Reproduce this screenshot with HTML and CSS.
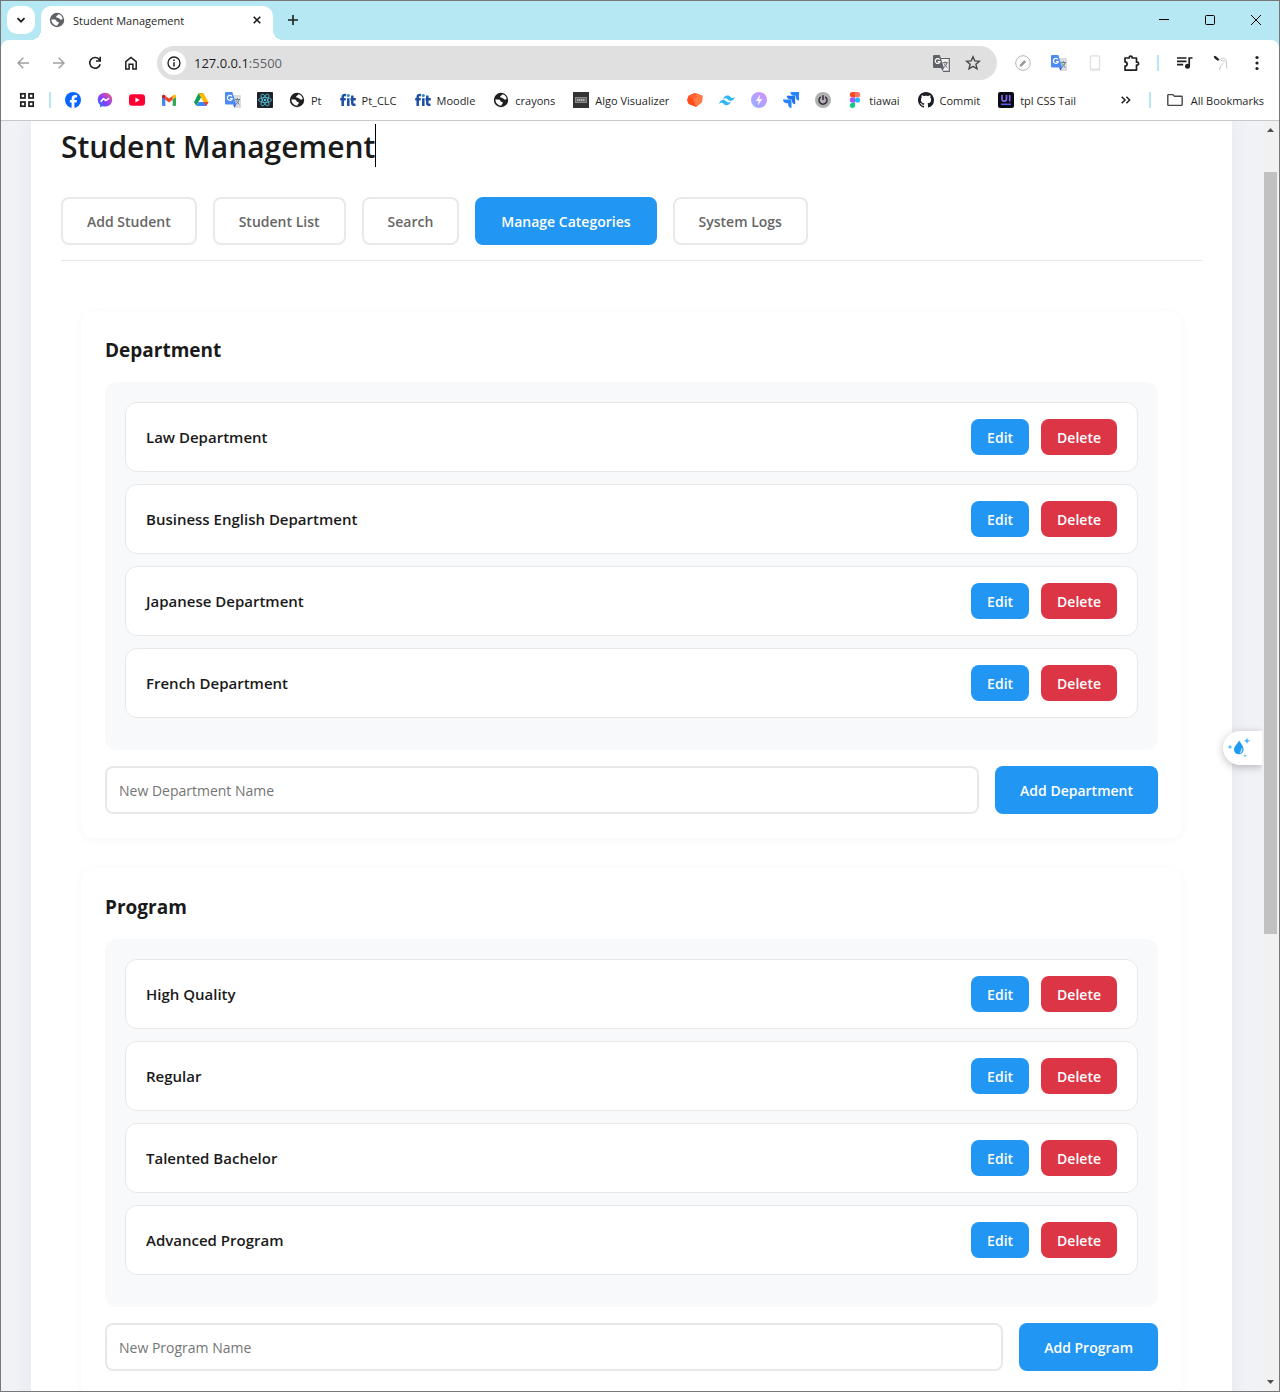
FILE: index.html
```html
<!DOCTYPE html>
<html lang="en">
<head>
<meta charset="utf-8">
<meta name="viewport" content="width=device-width, initial-scale=1">
<title>Student Management</title>
<link rel="stylesheet" href="styles.css">
</head>
<body>
<svg class="sprite" aria-hidden="true">
  <symbol id="globe" viewBox="0 0 16 16"><circle cx="8" cy="8" r="7.200" fill="currentColor"/><path d="M2.400 7.600h3.200c1.700 0 1.600 2.200 3.100 2.300 1 .1 1.100.4 1 1.300-.1 1-1.300 1-1.300 2.500-3.400 0-6-2.600-6-6.100zM9.500 2.300c-.3 1.300-2.300 1-2.300 2.500 0 1 1 1.100 2 1.100 1.300 0 1.500 1.700 2.900 1.700.8 0 1.300-.3 1.600-.9-.5-2.200-2-3.900-4.200-4.400z" fill="#fff"/></symbol>
  <symbol id="translate" viewBox="0 0 16 16"><path d="M7 3h8a1 1 0 0 1 1 1v11a1 1 0 0 1-1 1H10z" fill="#dcdcdc"/><path d="M1 0h6.300l4 12.500H1a1 1 0 0 1-1-1V1a1 1 0 0 1 1-1z" fill="#4c8bf5"/><path d="M8 12.500h3.300L9.500 15.800z" fill="#2c5fd8"/><path d="M6.900 4.400A2.500 2.500 0 1 0 7.300 6.500H5" fill="none" stroke="#fff" stroke-width="1.200"/><path d="M10 7.500h5M12.500 6.300v1.200M14 7.500c-.3 2-1.700 3.800-3 4.700M11.200 8.500c.6 1.600 1.700 2.800 3.200 4" fill="none" stroke="#607d8b" stroke-width="1"/></symbol>
  <symbol id="fit" viewBox="0 0 16 16"><g fill="none" stroke="#1c4ea8" stroke-width="2.500"><path d="M6 3.200C3.700 2.600 2.700 3.500 2.700 5v9M.2 7.200H5.700M8.300 6.200V14M12.300 3.500v8c0 1.200 1 1.500 3.200 1.200M10.500 7.200h5.300"/></g><circle cx="8.300" cy="3.500" r="1.500" fill="#2a86d8"/></symbol>
</svg>
<div class="window">
  <header class="chrome">
    <div class="tabstrip">
      <button class="tab-search" type="button" aria-label="Search tabs"><svg width="10" height="10" viewBox="0 0 10 10"><path d="M1.500 3.200 5 6.700l3.500-3.500" fill="none" stroke="#1f1f1f" stroke-width="1.800"/></svg></button>
      <div class="tab">
        <svg class="tab-icon" width="16" height="16"><use href="#globe"/></svg>
        <span class="tab-title">Student Management</span>
        <button class="tab-close" type="button" aria-label="Close tab"><svg width="8" height="8" viewBox="0 0 8 8"><path d="M.7.7l6.600 6.600M7.300.7.7 7.300" stroke="#1f1f1f" stroke-width="1.600"/></svg></button>
      </div>
      <button class="new-tab" type="button" aria-label="New tab"><svg width="12" height="12" viewBox="0 0 12 12"><path d="M6 1v10M1 6h10" stroke="#1f1f1f" stroke-width="1.600"/></svg></button>
      <div class="controls">
        <button type="button" aria-label="Minimize"><svg width="10" height="10" viewBox="0 0 10 10"><path d="M0 4.500h10" stroke="#000"/></svg></button>
        <button type="button" aria-label="Maximize"><svg width="10" height="10" viewBox="0 0 10 10"><rect x=".5" y=".5" width="9" height="9" rx="1" fill="none" stroke="#000"/></svg></button>
        <button type="button" aria-label="Close"><svg width="10" height="10" viewBox="0 0 10 10"><path d="M0 0l10 10M10 0 0 10" stroke="#000"/></svg></button>
      </div>
    </div>
    <div class="toolbar">
      <button class="tool" type="button" aria-label="Back"><svg width="12" height="12" viewBox="0 0 12 12"><path d="M12 6H1M6.300.7 1 6l5.300 5.300" fill="none" stroke="#a0a0a0" stroke-width="1.500"/></svg></button>
      <button class="tool" type="button" aria-label="Forward"><svg width="12" height="12" viewBox="0 0 12 12"><path d="M0 6h11M5.700.7 11 6l-5.300 5.300" fill="none" stroke="#a0a0a0" stroke-width="1.500"/></svg></button>
      <button class="tool" type="button" aria-label="Reload"><svg width="14" height="14" viewBox="0 0 14 14"><path d="M12.200 8.200A5.300 5.300 0 1 1 11 3.300l1 1.200" fill="none" stroke="#1f1f1f" stroke-width="1.600"/><path d="M13 .8v5H8V4.200h3.400V.8z" fill="#1f1f1f"/></svg></button>
      <button class="tool" type="button" aria-label="Home"><svg width="14" height="14" viewBox="0 0 14 14"><path d="M1.800 13V5.600L7 1.400l5.200 4.200V13H8.900V8.200H5.100V13z" fill="none" stroke="#1f1f1f" stroke-width="1.500"/></svg></button>
      <div class="omnibox">
        <button class="site-info" type="button" aria-label="View site information"><svg width="14" height="14" viewBox="0 0 14 14"><circle cx="7" cy="7" r="6" fill="none" stroke="#1f1f1f" stroke-width="1.300"/><path d="M7 6.200v4.200M7 3.500V5" stroke="#1f1f1f" stroke-width="1.500"/></svg></button>
        <span class="url">127.0.0.1<span class="port">:5500</span></span>
        <button class="omni-action" type="button" aria-label="Translate this page"><svg width="17" height="17" viewBox="0 0 17 17"><path d="M8 3.500h8.300v12.800H10" fill="#f2f2f2" stroke="#5f6368" stroke-width="1.200"/><path d="M1 0h5.800L11 13H1a1 1 0 0 1-1-1V1a1 1 0 0 1 1-1zM8 13h3l-1.500 3z" fill="#5f6368"/><path d="M6.600 4.600A2.400 2.400 0 1 0 7 6.600H4.800" fill="none" stroke="#fff" stroke-width="1.200"/><path d="M9.800 7.700h5M12.300 6.500v1.200M14 7.700c-.3 2-1.700 3.800-3 4.700M11.200 8.700c.6 1.600 1.700 2.800 3.200 4" fill="none" stroke="#5f6368"/></svg></button>
        <button class="omni-action" type="button" aria-label="Bookmark this tab"><svg width="16" height="16" viewBox="0 0 16 16"><path d="M8 1.700l1.800 4.200 4.600.4-3.500 3 1.100 4.500L8 11.400l-4 2.400 1.100-4.500-3.500-3 4.600-.4z" fill="none" stroke="#474747" stroke-width="1.400"/></svg></button>
      </div>
      <button class="tool" type="button" aria-label="Pen extension"><svg width="16" height="16" viewBox="0 0 16 16"><circle cx="8" cy="8" r="7.300" fill="#fff" stroke="#b5b5b5"/><path d="M4.500 11.700l.5-2.300 4.300-4.300 1.800 1.800-4.300 4.300z" fill="#999"/></svg></button>
      <button class="tool" type="button" aria-label="Google Translate"><svg width="16" height="16"><use href="#translate"/></svg></button>
      <button class="tool" type="button" aria-label="Device extension"><svg width="16" height="16" viewBox="0 0 16 16"><rect x="3.500" y=".8" width="9" height="14.400" rx="1" fill="none" stroke="#dedede" stroke-width="1.200"/><path d="M3.500 14h9" stroke="#dedede"/></svg></button>
      <button class="tool" type="button" aria-label="Extensions"><svg width="17" height="17" viewBox="0 0 17 17"><path d="M2 3h4.200V2.600a1.500 1.500 0 0 1 3 0V3h4.300v4.200h.6a1.500 1.500 0 0 1 0 3h-.6v4.900H2v-3.900c2.800-.2 2.800-4.200 0-4.400z" fill="none" stroke="#1f1f1f" stroke-width="1.700" stroke-linejoin="round"/></svg></button>
      <span class="divider"></span>
      <button class="tool" type="button" aria-label="Media controls"><svg width="16" height="14" viewBox="0 0 16 14"><path d="M0 2h9.500M0 5.300h9.500M0 8.600h6.200M15.500 2h-3.300v8" fill="none" stroke="#1f1f1f" stroke-width="1.700"/><circle cx="10.500" cy="10.200" r="2.500" fill="#1f1f1f"/></svg></button>
      <button class="tool" type="button" aria-label="Profile"><svg width="16" height="16" viewBox="0 0 16 16"><path d="M1 1.500 5.500 6M6 5.500C8 3 12 2.500 13 5l.8 8.500M6.500 15l1-4 3-3M8 5.500l4 .8" fill="none" stroke="#c9c5c5" stroke-width="1"/><path d="M.8.800 3 1.300l3.500 3.200-1.700 1.300L1.300 3.200z" fill="#222"/></svg></button>
      <button class="tool" type="button" aria-label="Menu"><svg width="4" height="16" viewBox="0 0 4 16"><g fill="#1f1f1f"><circle cx="2" cy="2.500" r="1.600"/><circle cx="2" cy="8" r="1.600"/><circle cx="2" cy="13.500" r="1.600"/></g></svg></button>
    </div>
    <nav class="bookmarks" aria-label="Bookmarks">
      <a class="mark" href="#" aria-label="Apps"><svg width="16" height="16" viewBox="0 0 16 16"><g fill="none" stroke="#1f1f1f" stroke-width="1.700"><rect x="1.800" y="1.800" width="4.200" height="4.200"/><rect x="10" y="1.800" width="4.200" height="4.200"/><rect x="1.800" y="10" width="4.200" height="4.200"/><rect x="10" y="10" width="4.200" height="4.200"/></g></svg></a>
      <span class="divider"></span>
      <a class="mark" href="#" aria-label="Facebook"><svg width="16" height="16" viewBox="0 0 16 16"><circle cx="8" cy="8" r="8" fill="#0866ff"/><path d="M6.600 15.900v-5.300H4.900V8.100h1.700V7c0-2.700 1.200-4 3.900-4 .5 0 1.300.1 1.600.2v2.200h-.9c-1.300 0-1.800.5-1.800 1.800v.9h2.600l-.5 2.500H9.400v5.400z" fill="#fff"/></svg></a>
      <a class="mark" href="#" aria-label="Messenger"><svg width="16" height="16" viewBox="0 0 16 16"><defs><linearGradient id="mg" x1="0" y1="1" x2="1" y2="0"><stop offset="0" stop-color="#1f7bff"/><stop offset=".45" stop-color="#8a3cff"/><stop offset="1" stop-color="#ff5f72"/></linearGradient></defs><path d="M8 .8c-4.100 0-7.200 3-7.200 6.900 0 2.100.8 3.900 2.200 5.100v2.400l2.200-1c.9.300 1.800.4 2.800.4 4.100 0 7.200-3 7.200-6.900S12.100.8 8 .8z" fill="url(#mg)"/><path d="M3.700 9.800 6.500 6.600l2.300 2 3.400-2.400" fill="none" stroke="#fff" stroke-width="1.500" stroke-linejoin="round"/></svg></a>
      <a class="mark" href="#" aria-label="YouTube"><svg width="16" height="16" viewBox="0 0 16 16"><rect y="2.300" width="16" height="11.400" rx="3" fill="#f03"/><path d="M6.400 5.600v4.800L10.600 8z" fill="#fff"/></svg></a>
      <a class="mark" href="#" aria-label="Gmail"><svg width="16" height="16" viewBox="0 0 16 16"><path d="M1 4.500 4.300 7v7H2a1 1 0 0 1-1-1z" fill="#4285f4"/><path d="M15 4.500 11.700 7v7H14a1 1 0 0 0 1-1z" fill="#34a853"/><path d="M4.300 3.700 8 6.500l3.700-2.800v4L8 10.500 4.300 7.700z" fill="#ea4335"/><path d="M1 4.200C1 2.500 2.800 2.300 4 3.300l.3.300v4L1 5.200z" fill="#c5221f"/><path d="M15 4.200c0-1.700-1.800-1.900-3-.9l-.3.300v4L15 5.200z" fill="#fbbc04"/></svg></a>
      <a class="mark" href="#" aria-label="Google Drive"><svg width="16" height="16" viewBox="0 0 16 16"><path d="M5.500 1.300h5L8 5.600 3.300 13.800 1 10.200z" fill="#0f9d58"/><path d="M5.500 1.300h5l5 8.700h-4.900z" fill="#ffba00"/><path d="M3.300 13.900 5.500 10h10l-2.300 3.900z" fill="#4285f4"/><path d="M10.600 10h4.900l-2.300 3.900z" fill="#ea4335"/></svg></a>
      <a class="mark" href="#" aria-label="Google Translate"><svg width="16" height="16"><use href="#translate"/></svg></a>
      <a class="mark" href="#" aria-label="React"><svg width="16" height="16" viewBox="0 0 16 16"><rect width="16" height="16" rx="1" fill="#20232a"/><g fill="none" stroke="#58c4dc" stroke-width=".8"><ellipse cx="8" cy="8" rx="6.500" ry="2.500"/><ellipse cx="8" cy="8" rx="6.500" ry="2.500" transform="rotate(60 8 8)"/><ellipse cx="8" cy="8" rx="6.500" ry="2.500" transform="rotate(120 8 8)"/></g><circle cx="8" cy="8" r="1.200" fill="#58c4dc"/></svg></a>
      <a class="mark labelled" href="#"><svg width="16" height="16"><use href="#globe"/></svg>Pt</a>
      <a class="mark labelled" href="#"><svg width="16" height="16"><use href="#fit"/></svg>Pt_CLC</a>
      <a class="mark labelled" href="#"><svg width="16" height="16"><use href="#fit"/></svg>Moodle</a>
      <a class="mark labelled" href="#"><svg width="16" height="16"><use href="#globe"/></svg>crayons</a>
      <a class="mark labelled" href="#"><svg width="16" height="16" viewBox="0 0 16 16"><rect width="16" height="16" fill="#333"/><rect x="2.500" y="5.500" width="11" height="5" fill="#666" stroke="#999" stroke-width=".8"/><path d="M4 8h8" stroke="#ccc" stroke-width="1.500" stroke-dasharray="1.500 .5"/></svg>Algo Visualizer</a>
      <a class="mark" href="#" aria-label="Codebox"><svg width="16" height="16" viewBox="0 0 16 16"><path d="M1.500 3.800 8 1l7.500 2.700L15 10l-6 5-7.500-3L0 8z" fill="#ff4a1c"/><path d="M8 1l7.500 2.700L15 10l-6 5-3-8z" fill="#ff7a45"/><path d="M1.500 3.800 8 1l2 4-4 2z" fill="#ff6332"/></svg></a>
      <a class="mark" href="#" aria-label="Tailwind"><svg width="16" height="16" viewBox="0 0 16 16"><path d="M4 7.900C4.500 5.300 6 3.500 8.300 3.500c3 0 3 2.300 5 2.600 1 .1 1.900-.4 2.700-1.300-.6 2.300-2 4-4.200 4-2.900 0-3-2.100-5-2.500-1-.1-2 .5-2.800 1.600zM0 12c.6-2.500 2-3.900 4.200-3.900 2.900 0 3 2.100 5 2.500 1 .1 2-.4 2.800-1.300-.6 2.300-2 3.900-4.200 3.900-2.900 0-3-2.100-5-2.500-1-.1-2 .3-2.800 1.300z" fill="#2eb8f5"/></svg></a>
      <a class="mark" href="#" aria-label="Lightning"><svg width="16" height="16" viewBox="0 0 16 16"><defs><linearGradient id="lg" x1="0" y1="1" x2="1" y2="0"><stop offset="0" stop-color="#8db4ff"/><stop offset="1" stop-color="#da8cff"/></linearGradient></defs><circle cx="8" cy="8" r="8" fill="url(#lg)"/><path d="M9.300 2.500 4.800 9h3l-1 4.500L11.300 7h-3z" fill="#fff"/></svg></a>
      <a class="mark" href="#" aria-label="Jira"><svg width="16" height="16" viewBox="0 0 16 16"><path d="M7.500 0H16v8.500c-2 0-3.200-1.400-3.200-3.200V3.700h-1.700C9 3.700 7.500 2.200 7.500 0z" fill="#2684ff"/><path d="M3.800 3.800h8.400v8.400C10.200 12.200 9 11 9 9V7.400H7.300c-2 0-3.500-1.400-3.500-3.600z" fill="#1f74ee"/><path d="M0 7.600h8.500V16c-2 0-3.300-1.200-3.300-3.200v-1.600H3.500C1.500 11.200 0 9.800 0 7.600z" fill="#2684ff"/></svg></a>
      <a class="mark" href="#" aria-label="Power"><svg width="16" height="16" viewBox="0 0 16 16"><circle cx="8" cy="8" r="8" fill="#b0b0b0"/><path d="M5.800 4.800a4 4 0 1 0 4.400 0M8 3.300V8" fill="none" stroke="#3a2b40" stroke-width="1.500"/></svg></a>
      <a class="mark labelled" href="#"><svg width="16" height="16" viewBox="0 0 16 16"><path d="M5.500 0H8v5.300H5.500a2.600 2.600 0 0 1 0-5.300z" fill="#f24e1e"/><path d="M8 0h2.500a2.600 2.600 0 0 1 0 5.300H8z" fill="#ff7262"/><path d="M5.500 5.300H8v5.400H5.500a2.600 2.600 0 0 1 0-5.400z" fill="#a259ff"/><circle cx="10.500" cy="8" r="2.600" fill="#1abcfe"/><path d="M5.500 10.700H8v2.600a2.600 2.600 0 1 1-2.500-2.600z" fill="#0acf83"/></svg>tiawai</a>
      <a class="mark labelled" href="#"><svg width="16" height="16" viewBox="0 0 16 16"><path fill="#1b1f24" d="M8 0C3.580 0 0 3.580 0 8c0 3.540 2.290 6.530 5.470 7.590.4.070.55-.17.55-.38 0-.19-.01-.82-.01-1.490-2.010.37-2.530-.49-2.690-.94-.09-.23-.48-.94-.82-1.130-.28-.15-.68-.52-.01-.53.63-.01 1.080.58 1.230.82.72 1.210 1.870.87 2.330.66.070-.52.28-.87.51-1.070-1.780-.2-3.640-.89-3.640-3.950 0-.87.31-1.590.82-2.150-.08-.2-.36-1.020.08-2.120 0 0 .67-.21 2.200.82.64-.18 1.320-.27 2-.27s1.360.09 2 .27c1.530-1.040 2.200-.82 2.200-.82.44 1.100.16 1.920.08 2.120.51.56.82 1.270.82 2.150 0 3.070-1.870 3.750-3.650 3.950.29.25.54.73.54 1.480 0 1.070-.01 1.930-.01 2.200 0 .21.15.46.55.38A8.010 8.010 0 0 0 16 8c0-4.420-3.580-8-8-8z"/></svg>Commit</a>
      <a class="mark labelled" href="#"><svg width="16" height="16" viewBox="0 0 16 16"><rect width="16" height="16" rx="2" fill="#0b0b12"/><path d="M4 3v4c0 3 4.500 3 4.500 0V3M11.700 3v6.500" fill="none" stroke="#8a6bff" stroke-width="1.600"/><path d="M3 12.300h10" stroke="#5b5bf0" stroke-width="1.500"/></svg>tpl CSS Tail</a>
      <button class="mark overflow" type="button" aria-label="More bookmarks"><svg width="10" height="8" viewBox="0 0 10 8"><path d="M.7.7 4 4 .7 7.300M5.400.7 8.700 4 5.400 7.300" fill="none" stroke="#1f1f1f" stroke-width="1.500"/></svg></button>
      <span class="divider"></span>
      <a class="mark labelled folder" href="#"><svg width="16" height="16" viewBox="0 0 16 16"><path d="M.8 12.700V3.300c0-.4.300-.7.700-.7h4.300l1.700 1.700h7c.4 0 .7.300.7.700v7.700c0 .4-.3.700-.7.700h-13a.7.700 0 0 1-.7-.7z" fill="none" stroke="#474747" stroke-width="1.400"/></svg>All Bookmarks</a>
    </nav>
  </header>
  <div class="viewport">
    <div class="page">
      <main class="container">
        <h1 class="title">Student Management<span class="caret"></span></h1>
        <nav class="nav">
          <button class="nav-btn" type="button">Add Student</button>
          <button class="nav-btn" type="button">Student List</button>
          <button class="nav-btn" type="button">Search</button>
          <button class="nav-btn active" type="button">Manage Categories</button>
          <button class="nav-btn" type="button">System Logs</button>
        </nav>
        <div class="categories">
          <section class="card">
            <h2 class="card-title">Department</h2>
            <ul class="list">
              <li class="item"><span>Law Department</span><span class="actions"><button class="btn" type="button">Edit</button><button class="btn danger" type="button">Delete</button></span></li>
              <li class="item"><span>Business English Department</span><span class="actions"><button class="btn" type="button">Edit</button><button class="btn danger" type="button">Delete</button></span></li>
              <li class="item"><span>Japanese Department</span><span class="actions"><button class="btn" type="button">Edit</button><button class="btn danger" type="button">Delete</button></span></li>
              <li class="item"><span>French Department</span><span class="actions"><button class="btn" type="button">Edit</button><button class="btn danger" type="button">Delete</button></span></li>
            </ul>
            <form class="add-row">
              <input class="field" type="text" placeholder="New Department Name" aria-label="New Department Name">
              <button class="add-btn" type="button">Add Department</button>
            </form>
          </section>
          <section class="card">
            <h2 class="card-title">Program</h2>
            <ul class="list">
              <li class="item"><span>High Quality</span><span class="actions"><button class="btn" type="button">Edit</button><button class="btn danger" type="button">Delete</button></span></li>
              <li class="item"><span>Regular</span><span class="actions"><button class="btn" type="button">Edit</button><button class="btn danger" type="button">Delete</button></span></li>
              <li class="item"><span>Talented Bachelor</span><span class="actions"><button class="btn" type="button">Edit</button><button class="btn danger" type="button">Delete</button></span></li>
              <li class="item"><span>Advanced Program</span><span class="actions"><button class="btn" type="button">Edit</button><button class="btn danger" type="button">Delete</button></span></li>
            </ul>
            <form class="add-row">
              <input class="field" type="text" placeholder="New Program Name" aria-label="New Program Name">
              <button class="add-btn" type="button">Add Program</button>
            </form>
          </section>
        </div>
      </main>
      <button class="widget" type="button" aria-label="Assistant"><svg width="24" height="22" viewBox="0 0 24 22"><path d="M12 3.500c2 3.200 4.600 6 4.600 9a4.800 4.800 0 0 1-9.600 0c0-3 3.500-5.500 5-9z" fill="#1b9cf2"/><path d="M14.500 11.500c.6 1.800 0 3.500-1.600 4.300" fill="none" stroke="#bfe3ff" stroke-width="1.200"/><path d="M20 .5l.9 2.400 2.400.9-2.400.9-.9 2.400-.9-2.400-2.400-.9 2.400-.9zM3 7.500l.7 1.800 1.800.7-1.800.7L3 12.500l-.7-1.800L.5 10l1.800-.7zM18 17l.5 1.200 1.200.5-1.200.5-.5 1.200-.5-1.200-1.200-.5 1.200-.5z" fill="#45b4f7"/></svg></button>
    </div>
    <div class="scrollbar" aria-hidden="true">
      <svg class="arrow" width="7" height="4" viewBox="0 0 7 4"><path d="M0 4 3.500 0 7 4z" fill="#505050"/></svg>
      <div class="track"><div class="thumb"></div></div>
      <svg class="arrow" width="7" height="4" viewBox="0 0 7 4"><path d="M0 0l3.500 4L7 0z" fill="#505050"/></svg>
    </div>
  </div>
</div>
</body>
</html>
```
FILE: styles.css
```css
* { box-sizing: border-box; }
body {
  margin: 0;
  font-family: "Open Sans", "Noto Sans", sans-serif;
  color: #1a1a1a;
}
button, input { font-family: inherit; }
button { border: 0; padding: 0; background: none; cursor: pointer; }
svg { display: block; flex: none; }
.sprite { position: absolute; width: 0; height: 0; }

.window {
  display: flex;
  flex-direction: column;
  height: 100vh;
  border: 1px solid #777;
  overflow: hidden;
}

/* Browser frame */
.chrome {
  flex: none;
  background: #b5e8f3;
  border-bottom: 1px solid #c8c8c8;
  font-size: 12px;
  color: #1f1f1f;
}
.tabstrip { display: flex; height: 39px; padding: 5px 0 0 6px; }
.tab-search, .tab-close, .new-tab, .controls button, .tool, .site-info, .omni-action {
  display: flex;
  align-items: center;
  justify-content: center;
}
.tab-search { width: 28px; height: 28px; border-radius: 10px; background: #fff; }
.tab {
  position: relative;
  display: flex;
  align-items: center;
  width: 232px;
  height: 34px;
  margin-left: 6px;
  padding: 0 8px 6px;
  border-radius: 10px 10px 0 0;
  background: #fff;
}
.tab::before, .tab::after {
  content: "";
  position: absolute;
  bottom: 0;
  width: 10px;
  height: 10px;
}
.tab::before { right: 100%; background: radial-gradient(circle at 0 0, transparent 10px, #fff 10px); }
.tab::after { left: 100%; background: radial-gradient(circle at 100% 0, transparent 10px, #fff 10px); }
.tab-icon { color: #5f6368; }
.tab-title { flex: 1; margin-left: 8px; font-size: 11px; }
.tab-close { width: 16px; height: 16px; }
.new-tab { width: 28px; height: 28px; margin-left: 6px; }
.controls { display: flex; margin-left: auto; }
.controls button { width: 46px; height: 28px; }

.toolbar {
  display: flex;
  align-items: center;
  height: 46px;
  padding: 0 4px;
  background: #fff;
  border-radius: 8px 8px 0 0;
}
.tool { width: 36px; height: 34px; }
.omnibox {
  display: flex;
  flex: 1;
  align-items: center;
  height: 34px;
  margin: 0 8px;
  padding: 0 8px 0 5px;
  border-radius: 17px;
  background: #e0e0e0;
}
.site-info { width: 24px; height: 24px; border-radius: 12px; background: #fff; }
.url { flex: 1; margin-left: 8px; font-size: 13px; }
.port { color: #5f6368; }
.omni-action { width: 32px; height: 28px; }
.divider { width: 2px; height: 16px; margin: 0 8px; background: #b5e8f3; }

.bookmarks {
  display: flex;
  align-items: center;
  height: 34px;
  padding: 0 5px 6px 10px;
  background: #fff;
}
.mark {
  display: flex;
  align-items: center;
  gap: 6px;
  padding: 0 8px;
  color: #1f1f1f;
  text-decoration: none;
  white-space: nowrap;
}
.labelled { padding-right: 10px; font-size: 11px; }
.bookmarks .divider { margin: 0 6px; }
.folder { gap: 8px; padding-left: 10px; }
.overflow { margin-left: auto; padding-right: 12px; }

/* Page */
.viewport { display: flex; flex: 1; min-height: 0; }
.page {
  position: relative;
  flex: 1;
  min-width: 0;
  padding: 0 30px;
  overflow: hidden;
  background: #f0f2f7;
}
.container {
  min-height: 100%;
  padding: 3px 30px 30px;
  background: #fff;
  box-shadow: 0 0 20px rgba(0, 0, 0, 0.05);
}
.title {
  display: flex;
  align-items: flex-end;
  height: 43px;
  margin: 0 0 30px;
  font-size: 30px;
  line-height: 40px;
  font-weight: 600;
}
.caret { width: 1px; height: 43px; background: #000; }
.nav {
  display: flex;
  gap: 16px;
  padding-bottom: 15px;
  border-bottom: 1px solid #e8e8e8;
}
.nav-btn {
  height: 48px;
  padding: 0 24px;
  border: 2px solid #e9e9e9;
  border-radius: 8px;
  background: #fff;
  color: #666;
  font-size: 14px;
  font-weight: 600;
}
.nav-btn.active { border-color: #2196f3; background: #2196f3; color: #fff; }
.categories { display: flex; flex-direction: column; gap: 30px; padding: 50px 20px 0; }
.card {
  padding: 24px;
  border-radius: 12px;
  background: #fff;
  box-shadow: 0 2px 8px rgba(0, 0, 0, 0.04);
}
.card-title { margin: 0 0 16px; font-size: 19px; line-height: 31px; font-weight: 700; }
.list {
  margin: 0;
  padding: 20px 20px 32px;
  border-radius: 12px;
  background: #f8f9fa;
  list-style: none;
}
.item {
  display: flex;
  align-items: center;
  justify-content: space-between;
  height: 70px;
  padding: 0 20px;
  border: 1px solid #e8e8e8;
  border-radius: 12px;
  background: #fff;
  font-size: 15px;
  font-weight: 600;
}
.item + .item { margin-top: 12px; }
.actions { display: flex; gap: 12px; }
.btn {
  height: 36px;
  padding: 0 16px;
  border-radius: 8px;
  background: #2196f3;
  color: #fff;
  font-size: 14px;
  font-weight: 600;
}
.btn.danger { background: #dc3545; }
.add-row { display: flex; gap: 16px; margin-top: 16px; }
.field {
  flex: 1;
  min-width: 0;
  height: 48px;
  padding: 0 12px;
  border: 2px solid #e8e8e8;
  border-radius: 8px;
  font-size: 14px;
}
.field::placeholder { color: #757575; }
.add-btn {
  height: 48px;
  padding: 0 25px;
  border-radius: 8px;
  background: #2196f3;
  color: #fff;
  font-size: 14px;
  font-weight: 600;
}
.widget {
  position: absolute;
  top: 48%;
  right: 0;
  width: 39px;
  height: 34px;
  padding-left: 4px;
  border-radius: 17px 0 0 17px;
  background: #fff;
  box-shadow: 0 2px 8px rgba(0, 0, 0, 0.25);
}
.scrollbar {
  display: flex;
  flex: none;
  flex-direction: column;
  align-items: center;
  justify-content: space-between;
  width: 17px;
  padding: 7px 2px;
  background: #f1f1f1;
}
.track { flex: 1; align-self: stretch; margin: 40px 0 18px; }
.thumb { width: 13px; height: 64%; background: #c1c1c1; }
```
